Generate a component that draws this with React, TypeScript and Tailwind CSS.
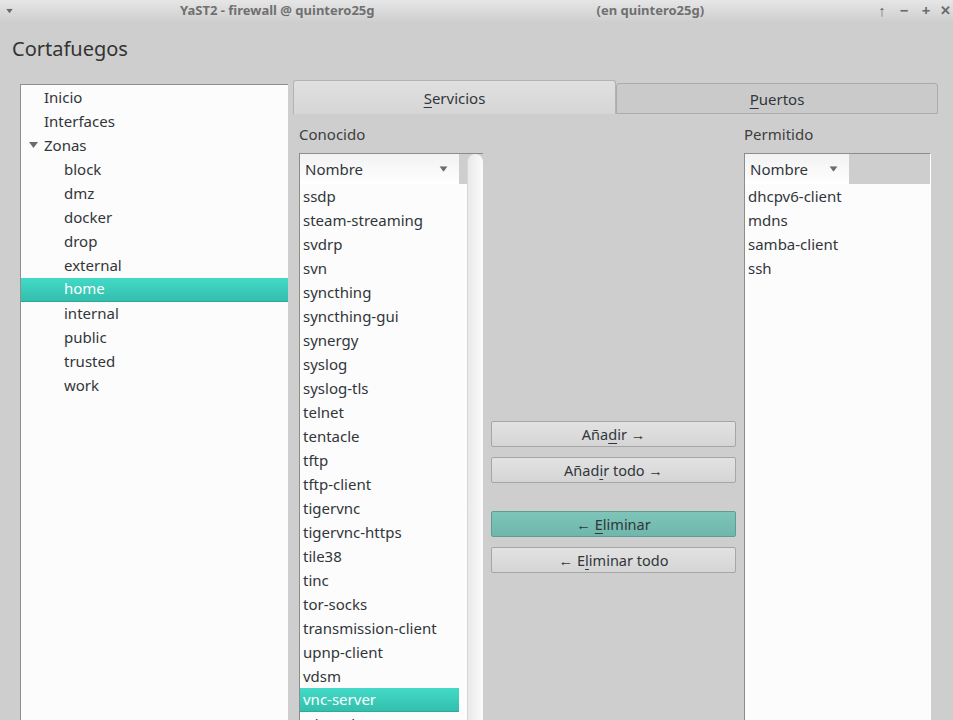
import React from 'react';

const zones = ['block', 'dmz', 'docker', 'drop', 'external', 'home', 'internal', 'public', 'trusted', 'work'];

const known = [
  'ssdp', 'steam-streaming', 'svdrp', 'svn', 'syncthing', 'syncthing-gui', 'synergy', 'syslog',
  'syslog-tls', 'telnet', 'tentacle', 'tftp', 'tftp-client', 'tigervnc', 'tigervnc-https', 'tile38',
  'tinc', 'tor-socks', 'transmission-client', 'upnp-client', 'vdsm', 'vnc-server', 'wbem-http',
];

const allowed = ['dhcpv6-client', 'mdns', 'samba-client', 'ssh'];

function Caret({ className = '' }: { className?: string }) {
  return (
    <svg width="9" height="6" viewBox="0 0 9 6" className={className}>
      <path d="M0 0 L9 0 L4.5 6 Z" fill="#6b6b6b" />
    </svg>
  );
}

function TitleBar() {
  return (
    <div className="h-[21px] flex items-center bg-gradient-to-b from-[#e6e6e6] to-[#d0d0d0] text-[13px] font-bold text-[#707070]">
      <Caret className="ml-[5px] scale-75" />
      <span className="ml-[166px]">YaST2 - firewall @ quintero25g</span>
      <span className="ml-[222px]">(en quintero25g)</span>
      <div className="ml-auto flex items-center text-[#6a6a6a]">
        <span className="w-[22px] text-center text-[15px] font-bold">↑</span>
        <span className="w-[22px] text-center text-[15px]">−</span>
        <span className="w-[22px] text-center text-[15px]">+</span>
        <span className="w-[16px] text-center text-[13px]">✕</span>
      </div>
    </div>
  );
}

function Tree() {
  return (
    <div className="w-[268px] h-[700px] mt-[4px] mr-px bg-[#fcfcfc] border-l border-t border-[#8f8f8f] pt-px text-[15px] text-[#31363b]">
      <div className="h-6 flex items-center pl-[23px] pb-[2px]">Inicio</div>
      <div className="h-6 flex items-center pl-[23px] pb-[2px]">Interfaces</div>
      <div className="h-6 flex items-center pl-[8px] pb-[2px]">
        <Caret className="mr-[6px]" />
        Zonas
      </div>
      {zones.map((z) =>
        z === 'home' ? (
          <div
            key={z}
            className="h-6 flex items-center pl-[43px] pb-[2px] bg-gradient-to-b from-[#42dac7] to-[#34bfad] text-white border-b border-[#2fa999]"
          >
            {z}
          </div>
        ) : (
          <div key={z} className="h-6 flex items-center pl-[43px] pb-[2px]">
            {z}
          </div>
        )
      )}
    </div>
  );
}

function Btn({ children, active = false }: { children: React.ReactNode; active?: boolean }) {
  return (
    <button
      className={`h-[26px] w-full rounded-[2px] border pt-px text-[14.5px] text-[#31363b] flex items-center justify-center ${
        active
          ? 'bg-gradient-to-b from-[#7ec4b9] to-[#6fb7ab] border-[#5f9d93]'
          : 'bg-gradient-to-b from-[#e2e2e2] to-[#d5d5d5] border-[#a6a6a6]'
      }`}
    >
      {children}
    </button>
  );
}

export default function App() {
  return (
    <div
      className="w-[953px] h-[720px] overflow-hidden bg-[#cecece] text-[#31363b]"
      style={{ fontFamily: '"Noto Sans", "Open Sans", sans-serif' }}
    >
      <TitleBar />
      <div className="h-[59px] pl-[12px] pt-[14px] text-[20px] leading-[28px] text-[#333]">Cortafuegos</div>
      <div className="flex pl-[20px]">
        <Tree />
        <div className="ml-[4px] w-[645px] flex flex-col">
          <div className="flex items-end h-[34px]">
            <div className="w-[323px] h-[34px] rounded-t-[3px] border border-b-0 border-[#b3b3b3] bg-gradient-to-b from-[#e0e0e0] to-[#d6d6d6] flex items-center justify-center text-[15px] pt-px">
              <span>
                <span className="underline underline-offset-[3px]">S</span>ervicios
              </span>
            </div>
            <div className="w-[322px] h-[31px] rounded-t-[3px] border border-[#ababab] bg-[#cacaca] flex items-center justify-center text-[15px] pt-px">
              <span>
                <span className="underline underline-offset-[3px]">P</span>uertos
              </span>
            </div>
          </div>
          <div className="flex pl-[6px] gap-[8px] text-[15px]">
            <div className="w-[184px] flex flex-col">
              <div className="pt-[10px] h-[39px] leading-[20px] text-[#3d3d3d]">Conocido</div>
              <div className="h-[600px] border-t border-l border-[#8c8c8c] flex">
                <div className="w-[167px] bg-[#fcfcfc] flex flex-col">
                  <div className="h-[30px] flex bg-[#cecece]">
                    <div className="w-[159px] flex items-center justify-between pl-[5px] pr-[11px] bg-gradient-to-b from-[#f2f2f2] to-white">
                      <span>Nombre</span>
                      <Caret className="scale-90" />
                    </div>
                  </div>
                  {known.map((k) =>
                    k === 'vnc-server' ? (
                      <div key={k} className="w-[159px] h-6 flex items-center pl-[3px] bg-gradient-to-b from-[#42dac7] to-[#34bfad] text-white border-b border-[#2fa999]">
                        {k}
                      </div>
                    ) : (
                      <div key={k} className="w-[159px] h-6 flex items-center pl-[3px]">
                        {k}
                      </div>
                    )
                  )}
                </div>
                <div className="w-[16px] rounded-t-[8px] border-l border-[#d6d6d6] bg-gradient-to-r from-[#e9e9e9] to-[#fbfbfb]" />
              </div>
            </div>
            <div className="w-[245px] pt-[307px] flex flex-col">
              <Btn>
                Aña<span className="underline underline-offset-[3px]">d</span>ir →
              </Btn>
              <div className="h-[10px]" />
              <Btn>
                Añad<span className="underline underline-offset-[3px]">i</span>r todo →
              </Btn>
              <div className="h-[28px]" />
              <Btn active>
                ← <span className="ml-[4px] underline underline-offset-[3px]">E</span>liminar
              </Btn>
              <div className="h-[10px]" />
              <Btn>
                ← <span className="ml-[4px]">E</span>
                <span className="underline underline-offset-[3px]">l</span>iminar todo
              </Btn>
            </div>
            <div className="w-[187px] flex flex-col">
              <div className="pt-[10px] h-[39px] leading-[20px] text-[#3d3d3d]">Permitido</div>
              <div className="h-[600px] border-t border-l border-r border-[#8c8c8c] border-r-white bg-[#fcfcfc] flex flex-col">
                <div className="h-[30px] flex bg-[#cecece]">
                  <div className="w-[104px] flex items-center justify-between pl-[5px] pr-[11px] bg-gradient-to-b from-[#f2f2f2] to-white">
                    <span>Nombre</span>
                    <Caret className="scale-90" />
                  </div>
                </div>
                {allowed.map((a) => (
                  <div key={a} className="h-6 flex items-center pl-[3px]">
                    {a}
                  </div>
                ))}
              </div>
            </div>
          </div>
        </div>
      </div>
    </div>
  );
}
